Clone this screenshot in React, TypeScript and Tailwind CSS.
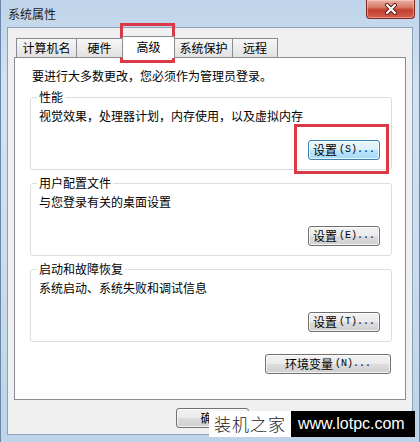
const TABS = [
  { id: 'name', label: '计算机名', width: 'w-[61px]' },
  { id: 'hw', label: '硬件', width: 'w-[47px]' },
  { id: 'adv', label: '高级', width: 'w-[53px]' },
  { id: 'prot', label: '系统保护', width: 'w-[59px]' },
  { id: 'remote', label: '远程', width: 'w-[46px]' },
];

const GROUPS = [
  { title: '性能', text: '视觉效果，处理器计划，内存使用，以及虚拟内存', hotkey: 'S', focused: true },
  { title: '用户配置文件', text: '与您登录有关的桌面设置', hotkey: 'E', focused: false },
  { title: '启动和故障恢复', text: '系统启动、系统失败和调试信息', hotkey: 'T', focused: false },
];

function WinButton({
  label,
  hotkey,
  focused = false,
  className = '',
}: {
  label: string;
  hotkey?: string;
  focused?: boolean;
  className?: string;
}) {
  return (
    <button
      className={`flex h-[20px] items-center justify-center rounded-[3px] border text-[12px] leading-none text-black shadow-[inset_0_0_0_1px_rgba(255,255,255,0.75)] ${
        focused
          ? 'border-[#3c7fb1] bg-[linear-gradient(to_bottom,#eaf6fd_0%,#d9f0fc_50%,#bee6fd_50%,#a7d9f5_100%)]'
          : 'border-[#707070] bg-[linear-gradient(to_bottom,#f2f2f2_0%,#ebebeb_50%,#dddddd_50%,#cfcfcf_100%)]'
      } ${className}`}
    >
      <span>{label}</span>
      {hotkey && (
        <span className="ml-[2px] font-['Liberation_Mono',monospace] text-[10px]">({hotkey})...</span>
      )}
    </button>
  );
}

function CloseButton() {
  return (
    <div className="mr-[5px] flex h-[19px] w-[49px] items-center justify-center self-start rounded-b-[4px] border border-t-0 border-[#7a2a22] bg-[linear-gradient(to_bottom,#eab0a4_0%,#d77a68_40%,#c2402e_55%,#d4604a_100%)] shadow-[inset_0_0_0_1px_rgba(255,220,210,0.45)]">
      <svg width="14" height="12" viewBox="0 0 14 12">
        <path d="M3 2 L11 10 M11 2 L3 10" stroke="#5a1c16" strokeWidth="4" strokeLinecap="round" />
        <path d="M3 2 L11 10 M11 2 L3 10" stroke="#ffffff" strokeWidth="2.2" strokeLinecap="round" />
      </svg>
    </div>
  );
}

export default function App() {
  return (
    <div className="relative flex h-[442px] w-[420px] flex-col overflow-hidden bg-[linear-gradient(to_bottom,#bfd4ea_0%,#d4e3f2_20%,#cadcee_60%,#bed3e9_100%)] font-['Noto_Sans_CJK_SC','Noto_Sans',sans-serif] text-black shadow-[inset_1px_0_0_#6a87a8,inset_-1px_0_0_#6a87a8]">
      {/* title bar */}
      <div className="flex h-[27px] shrink-0 justify-between">
        <span className="pl-[8px] pt-[6px] text-[12px] leading-[16px] text-[#1b1b1b]">系统属性</span>
        <CloseButton />
      </div>

      {/* client area */}
      <div className="mx-[7px] h-[408px] border border-[#8da2ba] bg-[#f0f0f0] pl-[6px] pr-[6px] pt-[8px]">
        <div className="relative z-10 mb-[-1px] ml-[2px] flex h-[22px] items-end">
          {TABS.map((tab, i) => {
            const active = tab.id === 'adv';
            return (
              <div
                key={tab.id}
                className={`${tab.width} ${i > 0 ? '-ml-px' : ''} flex items-center justify-center border border-b-0 border-[#898c95] text-[12px] leading-[16px] ${
                  active
                    ? 'relative z-10 h-[22px] rounded-t-[2px] bg-white pb-[1px]'
                    : 'mb-[1px] h-[19px] bg-[linear-gradient(to_bottom,#f7f7f7,#e1e1e1)]'
                }`}
              >
                {tab.label}
              </div>
            );
          })}
        </div>

        <div className="flex h-[343px] flex-col border border-[#898c95] bg-white pl-[15px] pr-[13px] pt-[10px]">
          <p className="pl-[2px] text-[12px] leading-[16px]">要进行大多数更改，您必须作为管理员登录。</p>

          {GROUPS.map((g) => (
            <fieldset key={g.title} className="mt-[5px] rounded-[3px] border border-[#d5dfe5] pb-[9px]">
              <legend className="ml-[6px] px-[2px] text-[12px] leading-[16px]">{g.title}</legend>
              <p className="mt-[3px] pl-[8px] text-[12px] leading-[16px]">{g.text}</p>
              <div className="mt-[16px] flex justify-end pr-[11px]">
                <WinButton label="设置" hotkey={g.hotkey} focused={g.focused} className="w-[72px]" />
              </div>
            </fieldset>
          ))}

          <WinButton label="环境变量" hotkey="N" className="mr-[1px] mt-[12px] w-[126px] self-end" />
        </div>

        <div className="mt-[8px] flex pl-[162px]">
          <WinButton label="确定" className="w-[73px]" />
        </div>
      </div>

      {/* annotation boxes */}
      <div className="absolute left-[120px] top-[23px] h-[40px] w-[55px] border-[3px] border-[#d93a46]" />
      <div className="absolute left-[294px] top-[124px] h-[50px] w-[95px] border-[3px] border-[#d93a46]" />

      {/* site watermark */}
      <div className="absolute left-[209px] top-[411px] flex h-[26px]">
        <div className="flex w-[82px] items-center justify-center bg-white text-[17px] font-light tracking-[1px] text-[#222]">
          装机之家
        </div>
        <div className="flex w-[124px] items-center bg-black pl-[7px] font-['Liberation_Sans',Arial,sans-serif] text-[16px] text-white">
          www.lotpc.com
        </div>
      </div>
    </div>
  );
}
